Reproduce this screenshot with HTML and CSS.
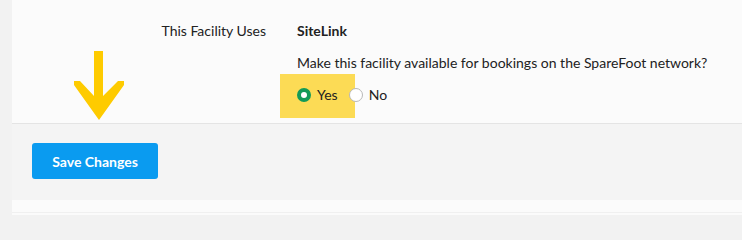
FILE: index.html
```html
<!DOCTYPE html>
<html>
<head>
<meta charset="utf-8">
<link rel="stylesheet" href="styles.css">
</head>
<body>
<div class="page">
  <div class="content">
    <div class="row">
      <div class="label">This Facility Uses</div>
      <div class="value">
        <div class="software">SiteLink</div>
        <p class="question">Make this facility available for bookings on the SpareFoot network?</p>
        <div class="radios">
          <span class="highlight"></span>
          <label class="option"><span class="radio checked"></span>Yes</label>
          <label class="option"><span class="radio"></span>No</label>
        </div>
      </div>
    </div>
    <svg class="arrow" width="52" height="70" viewBox="0 0 52 70">
      <polygon fill="#fecb00" points="21,0 30,0 30,45 45,30 51,30 51,34 26,69 1,34 1,30 7,30 21,45"/>
    </svg>
  </div>
  <div class="footer">
    <button class="save">Save Changes</button>
  </div>
  <div class="bottom"></div>
</div>
</body>
</html>
```
FILE: styles.css
```css
html, body {
  margin: 0;
  padding: 0;
}
body {
  background: #f2f2f2;
  font-family: Lato, "Open Sans", sans-serif;
  color: #222;
  font-size: 14px;
  width: 742px;
  height: 215px;
  overflow: hidden;
}
.page {
  margin-left: 12px;
  background: #fbfbfb;
  height: 215px;
}
.content {
  position: relative;
  padding-top: 22px;
  padding-bottom: 19px;
}
.row {
  display: grid;
  grid-template-columns: 254px 1fr;
  column-gap: 31px;
}
.label {
  text-align: right;
  line-height: 18px;
}
.value {
  line-height: 18px;
}
.software {
  font-weight: 700;
}
.question {
  margin: 14px 0 0;
}
.radios {
  position: relative;
  margin-top: 14px;
  display: flex;
  align-items: center;
  height: 18px;
}
.highlight {
  position: absolute;
  left: -17px;
  top: -12px;
  width: 75px;
  height: 44px;
  background: #fcdb55;
}
.option {
  position: relative;
  display: flex;
  align-items: center;
}
.option + .option {
  margin-left: 11px;
}
.radio {
  box-sizing: border-box;
  width: 14px;
  height: 14px;
  border-radius: 50%;
  border: 1px solid #b8b8b8;
  background: #fff;
  margin-right: 6px;
}
.radio.checked {
  border: 4.5px solid #129a58;
  background: #fff;
}
.arrow {
  position: absolute;
  left: 61px;
  top: 51px;
}
.footer {
  background: #f4f4f4;
  border-top: 1px solid #e4e4e4;
  padding: 19px 20px 21px;
}
.save {
  display: block;
  width: 126px;
  height: 36px;
  border: none;
  border-radius: 3px;
  background: #0a9bf0;
  color: #fff;
  font-family: Lato, "Open Sans", sans-serif;
  font-weight: 700;
  font-size: 14px;
  padding: 0;
}
.bottom {
  height: 12px;
  border-bottom: 1px solid #f0f0f0;
}
```
